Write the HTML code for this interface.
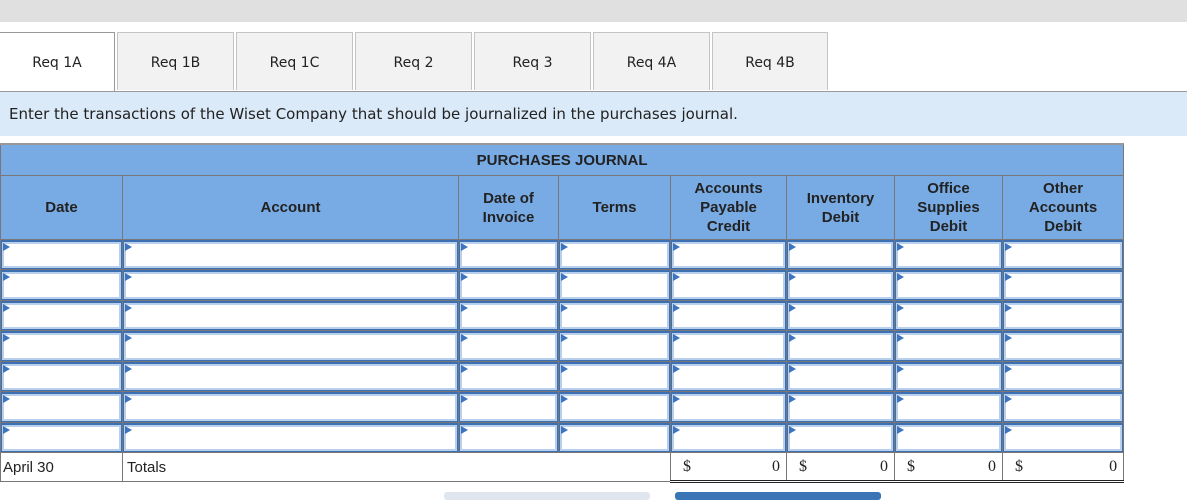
<!DOCTYPE html>
<html><head><meta charset="utf-8"><style>
body{margin:0;width:1187px;height:497px;background:#fff;overflow:hidden;position:relative;font-family:"Liberation Sans",Arial,sans-serif}
.top{position:absolute;left:0;top:0;width:1187px;height:22px;background:#e0e0e0}
.tab{position:absolute;top:32px;height:58px;background:#f2f2f2;border:1px solid #c4c4c4;border-bottom:none;font-family:"DejaVu Sans",Verdana,sans-serif;font-size:14px;color:#222;text-align:center;line-height:60px;box-sizing:border-box}
.tab.a{background:#fff;border:1px solid #999;border-bottom:none;border-left:none;height:60px}
.band{position:absolute;left:0;top:91px;width:1187px;height:45px;background:#dbeaf8;border-top:1px solid #999;box-sizing:border-box;font-family:"DejaVu Sans",Verdana,sans-serif;font-size:15px;color:#222;line-height:44px;padding-left:9px}
table{position:absolute;left:0;top:143px;border-collapse:collapse;width:1123px;table-layout:fixed;font-family:"Liberation Sans",Arial,sans-serif}
td,th{border:1px solid #777;padding:0;font-family:"Liberation Sans",Arial,sans-serif}
th{background:#78abe4;font-size:15px;font-weight:bold;color:#222;line-height:19px}
tr.in td{height:29px;background:#fff}
tr.in.t td{height:30px}
.c{height:26px;border:1px solid #3c70b2;border-top-width:2px;box-shadow:inset 0 0 0 2px #b8d0ee;background:#fff;position:relative}
.t .c{height:27px}
.c:before{content:"";position:absolute;left:1px;top:1px;border-left:7px solid #3c74c0;border-top:4px solid transparent;border-bottom:4px solid transparent}
tr.tot td{height:27px;font-size:15px;color:#222;border-bottom:3px double #222}
.s{font-family:"Liberation Serif",serif;font-size:16px;display:flex;justify-content:space-between;padding:0 6px 0 12px}
</style></head><body>
<div class="top"></div>
<div class="tab a" style="left:0;width:115px">Req 1A</div>
<div class="tab" style="left:117px;width:117px">Req 1B</div>
<div class="tab" style="left:236px;width:117px">Req 1C</div>
<div class="tab" style="left:355px;width:117px">Req 2</div>
<div class="tab" style="left:474px;width:117px">Req 3</div>
<div class="tab" style="left:593px;width:117px">Req 4A</div>
<div class="tab" style="left:712px;width:116px">Req 4B</div>
<div class="band">Enter the transactions of the Wiset Company that should be journalized in the purchases journal.</div>
<table>
<colgroup><col style="width:122px"><col style="width:336px"><col style="width:100px"><col style="width:112px"><col style="width:116px"><col style="width:108px"><col style="width:108px"><col style="width:121px"></colgroup>
<tr><th colspan="8" style="height:30px;border-top:2px solid #999">PURCHASES JOURNAL</th></tr>
<tr><th style="height:63px">Date</th><th>Account</th><th>Date of<br>Invoice</th><th>Terms</th><th>Accounts<br>Payable<br>Credit</th><th>Inventory<br>Debit</th><th>Office<br>Supplies<br>Debit</th><th>Other<br>Accounts<br>Debit</th></tr>
<tr class="in"><td><div class="c"></div></td><td><div class="c"></div></td><td><div class="c"></div></td><td><div class="c"></div></td><td><div class="c"></div></td><td><div class="c"></div></td><td><div class="c"></div></td><td><div class="c"></div></td></tr>
<tr class="in t"><td><div class="c"></div></td><td><div class="c"></div></td><td><div class="c"></div></td><td><div class="c"></div></td><td><div class="c"></div></td><td><div class="c"></div></td><td><div class="c"></div></td><td><div class="c"></div></td></tr>
<tr class="in"><td><div class="c"></div></td><td><div class="c"></div></td><td><div class="c"></div></td><td><div class="c"></div></td><td><div class="c"></div></td><td><div class="c"></div></td><td><div class="c"></div></td><td><div class="c"></div></td></tr>
<tr class="in t"><td><div class="c"></div></td><td><div class="c"></div></td><td><div class="c"></div></td><td><div class="c"></div></td><td><div class="c"></div></td><td><div class="c"></div></td><td><div class="c"></div></td><td><div class="c"></div></td></tr>
<tr class="in"><td><div class="c"></div></td><td><div class="c"></div></td><td><div class="c"></div></td><td><div class="c"></div></td><td><div class="c"></div></td><td><div class="c"></div></td><td><div class="c"></div></td><td><div class="c"></div></td></tr>
<tr class="in t"><td><div class="c"></div></td><td><div class="c"></div></td><td><div class="c"></div></td><td><div class="c"></div></td><td><div class="c"></div></td><td><div class="c"></div></td><td><div class="c"></div></td><td><div class="c"></div></td></tr>
<tr class="in"><td><div class="c"></div></td><td><div class="c"></div></td><td><div class="c"></div></td><td><div class="c"></div></td><td><div class="c"></div></td><td><div class="c"></div></td><td><div class="c"></div></td><td><div class="c"></div></td></tr>
<tr class="tot"><td style="padding-left:2px;border-bottom:1px solid #777">April 30</td><td colspan="3" style="padding-left:4px;border-bottom:1px solid #777">Totals</td><td><div class="s"><span>$</span><span>0</span></div></td><td><div class="s"><span>$</span><span>0</span></div></td><td><div class="s"><span>$</span><span>0</span></div></td><td><div class="s"><span>$</span><span>0</span></div></td></tr>
</table>
<div style="position:absolute;left:444px;top:492px;width:206px;height:8px;background:#dfe6ee;border-radius:3px"></div>
<div style="position:absolute;left:675px;top:492px;width:206px;height:8px;background:#3a75b5;border-radius:3px"></div>
</body></html>
